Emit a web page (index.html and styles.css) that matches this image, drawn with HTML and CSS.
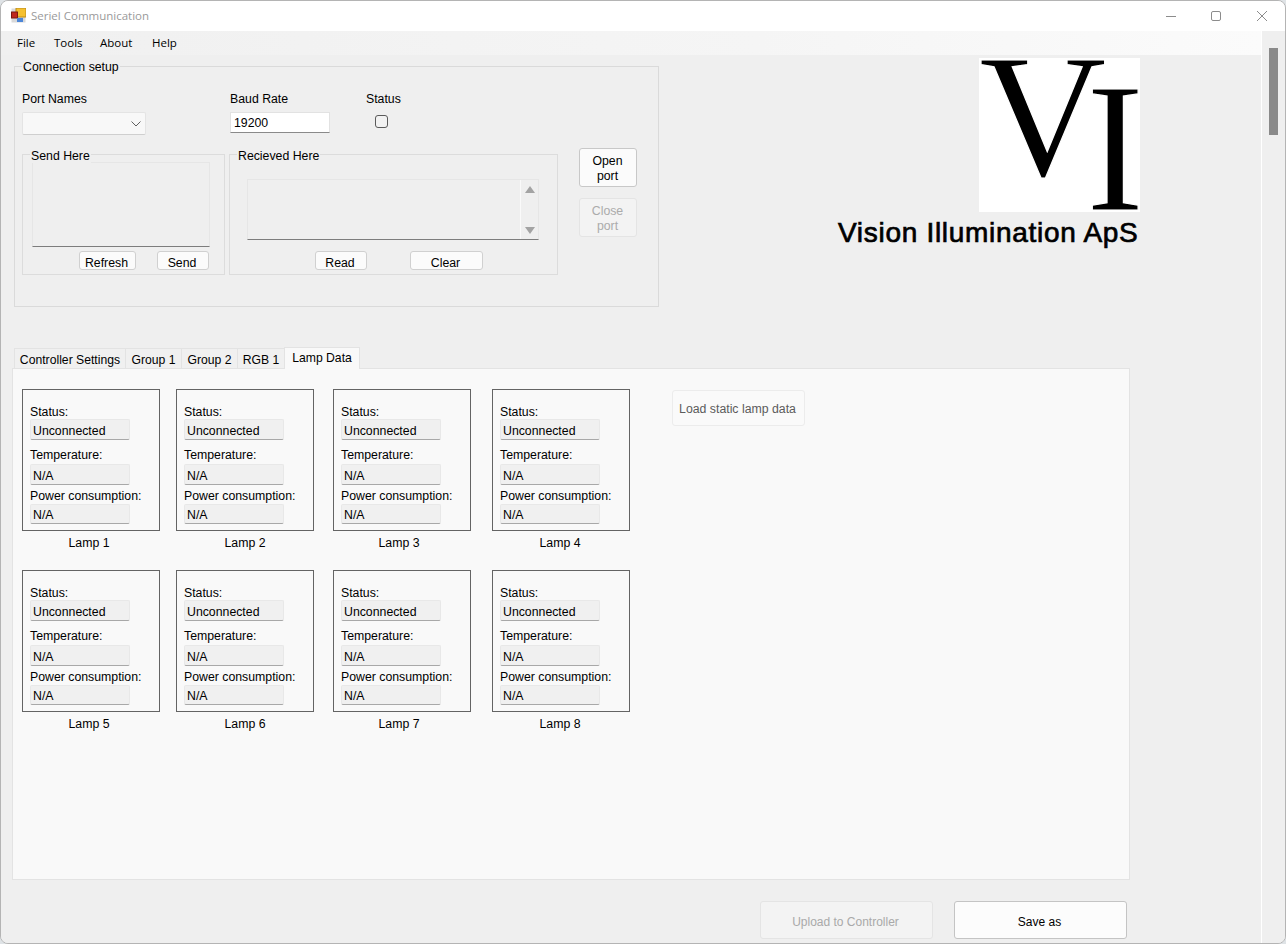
FILE: index.html
```html
<!DOCTYPE html>
<html lang="en">
<head>
<meta charset="utf-8">
<title>Seriel Communication</title>
<link rel="stylesheet" href="styles.css">
</head>
<body>
<div class="window">
  <header class="titlebar">
    <svg class="app-icon" width="15" height="15" viewBox="0 0 15 15">
      <rect x="0.5" y="0.5" width="14" height="14" fill="#d9d9d9"/>
      <rect x="5" y="0" width="10" height="9" fill="#f5c030" stroke="#b98a1a"/>
      <rect x="0.5" y="4" width="6" height="6" fill="#c0281e" stroke="#7a1a12"/>
      <rect x="6" y="10" width="6" height="4" fill="#4c86d8"/>
    </svg>
    <span class="title-text">Seriel Communication</span>
    <div class="win-controls">
      <svg class="win-min" width="10" height="10" viewBox="0 0 10 10"><path d="M0 5.5H10" stroke="#8c8c8c" fill="none"/></svg>
      <svg class="win-max" width="10" height="10" viewBox="0 0 10 10"><rect x="0.5" y="0.5" width="9" height="9" rx="1.5" stroke="#8c8c8c" fill="none"/></svg>
      <svg class="win-close" width="10" height="10" viewBox="0 0 10 10"><path d="M0 0L10 10M10 0L0 10" stroke="#8c8c8c" fill="none"/></svg>
    </div>
  </header>
  <div class="client">
    <main class="main">
      <nav class="menubar">
        <span class="menu-item">File</span>
        <span class="menu-item">Tools</span>
        <span class="menu-item">About</span>
        <span class="menu-item">Help</span>
      </nav>
      <section class="top-row">
        <div class="conn-panel">
          <span class="legend legend-conn">Connection setup</span>
          <div class="conn-fields">
            <div class="col-port">
              <label class="field-label">Port Names</label>
              <div class="combo">
                <svg width="10" height="6" viewBox="0 0 10 6"><path d="M0.5 0.5L5 5L9.5 0.5" stroke="#606060" fill="none"/></svg>
              </div>
            </div>
            <div class="col-baud">
              <label class="field-label">Baud Rate</label>
              <div class="input">19200</div>
            </div>
            <div class="col-status">
              <label class="field-label">Status</label>
              <span class="checkbox"></span>
            </div>
          </div>
          <div class="groups-row">
            <div class="group group-send">
              <span class="legend legend-group">Send Here</span>
              <div class="textbox textbox-send"></div>
              <div class="group-buttons">
                <span class="btn-small btn-refresh">Refresh</span>
                <span class="btn-small btn-send">Send</span>
              </div>
            </div>
            <div class="group group-recv">
              <span class="legend legend-group">Recieved Here</span>
              <div class="textbox textbox-recv">
                <div class="tb-scroll">
                  <span class="arrow-up"></span>
                  <span class="arrow-down"></span>
                </div>
              </div>
              <div class="group-buttons">
                <span class="btn-small btn-read">Read</span>
                <span class="btn-small btn-clear">Clear</span>
              </div>
            </div>
            <div class="port-buttons">
              <span class="btn-port">Open<br>port</span>
              <span class="btn-port btn-disabled">Close<br>port</span>
            </div>
          </div>
        </div>
        <div class="brand">
          <div class="logo"><span class="logo-v">V</span><span class="logo-i">I</span></div>
          <div class="company">Vision Illumination ApS</div>
        </div>
      </section>

      <div class="tabs">
        <span class="tab tab-controller">Controller Settings</span>
        <span class="tab tab-group">Group 1</span>
        <span class="tab tab-group">Group 2</span>
        <span class="tab tab-rgb">RGB 1</span>
        <span class="tab tab-active">Lamp Data</span>
      </div>
      <section class="tab-panel">
        <div class="lamp-grid">
          <div class="lamp lamp-a"><div class="lamp-box"><div class="l-status">Status:</div><div class="l-field">Unconnected</div><div class="l-temp">Temperature:</div><div class="l-field">N/A</div><div class="l-power">Power consumption:</div><div class="l-field">N/A</div></div><div class="lamp-name">Lamp 1</div></div>
          <div class="lamp lamp-b"><div class="lamp-box"><div class="l-status">Status:</div><div class="l-field">Unconnected</div><div class="l-temp">Temperature:</div><div class="l-field">N/A</div><div class="l-power">Power consumption:</div><div class="l-field">N/A</div></div><div class="lamp-name">Lamp 2</div></div>
          <div class="lamp lamp-c"><div class="lamp-box"><div class="l-status">Status:</div><div class="l-field">Unconnected</div><div class="l-temp">Temperature:</div><div class="l-field">N/A</div><div class="l-power">Power consumption:</div><div class="l-field">N/A</div></div><div class="lamp-name">Lamp 3</div></div>
          <div class="lamp lamp-d"><div class="lamp-box"><div class="l-status">Status:</div><div class="l-field">Unconnected</div><div class="l-temp">Temperature:</div><div class="l-field">N/A</div><div class="l-power">Power consumption:</div><div class="l-field">N/A</div></div><div class="lamp-name">Lamp 4</div></div>
          <div class="lamp lamp-a"><div class="lamp-box"><div class="l-status">Status:</div><div class="l-field">Unconnected</div><div class="l-temp">Temperature:</div><div class="l-field">N/A</div><div class="l-power">Power consumption:</div><div class="l-field">N/A</div></div><div class="lamp-name">Lamp 5</div></div>
          <div class="lamp lamp-b"><div class="lamp-box"><div class="l-status">Status:</div><div class="l-field">Unconnected</div><div class="l-temp">Temperature:</div><div class="l-field">N/A</div><div class="l-power">Power consumption:</div><div class="l-field">N/A</div></div><div class="lamp-name">Lamp 6</div></div>
          <div class="lamp lamp-c"><div class="lamp-box"><div class="l-status">Status:</div><div class="l-field">Unconnected</div><div class="l-temp">Temperature:</div><div class="l-field">N/A</div><div class="l-power">Power consumption:</div><div class="l-field">N/A</div></div><div class="lamp-name">Lamp 7</div></div>
          <div class="lamp lamp-d"><div class="lamp-box"><div class="l-status">Status:</div><div class="l-field">Unconnected</div><div class="l-temp">Temperature:</div><div class="l-field">N/A</div><div class="l-power">Power consumption:</div><div class="l-field">N/A</div></div><div class="lamp-name">Lamp 8</div></div>
        </div>
        <span class="btn-load">Load static lamp data</span>
      </section>
      <div class="footer-buttons">
        <span class="btn-footer btn-footer-disabled">Upload to Controller</span>
        <span class="btn-footer">Save as</span>
      </div>
    </main>
    <aside class="scrollbar"><div class="thumb"></div></aside>
  </div>
</div>
</body>
</html>
```
FILE: styles.css
```css
* { box-sizing: border-box; }
html, body { margin: 0; padding: 0; background: #dfe3e6; }
body { font-family: "Liberation Sans", Arial, sans-serif; font-size: 12.3px; color: #000; }

.window {
  width: 1286px; height: 944px;
  border: 1px solid #b4b4b4; border-radius: 8px;
  overflow: hidden;
  display: flex; flex-direction: column;
  background: #efefef;
}

.titlebar {
  height: 30px; flex: none;
  background: #fff;
  display: flex; align-items: center;
  padding-left: 10px;
}
.app-icon { flex: none; margin-top: -1px; }
.title-text {
  font-family: "Open Sans", sans-serif; font-size: 11.5px; color: #9a9a9a;
  margin-left: 5px; margin-top: -1px;
}
.win-controls { margin-left: auto; display: flex; align-items: center; margin-top: -1px; }
.win-min { margin-right: 35px; }
.win-max { margin-right: 36px; }
.win-close { margin-right: 18px; }

.client { flex: 1; display: flex; min-height: 0; }
.main { width: 1260px; flex: none; display: flex; flex-direction: column; background: #efefef; }

.menubar {
  height: 24px; flex: none;
  display: grid; grid-template-columns: 37px 46px 52px auto; align-items: center;
  padding: 0 0 2px 16px;
  font-family: "Open Sans", sans-serif; font-size: 11.5px;
  background: linear-gradient(90deg, #f0f0f0 0%, #f5f5f5 60%, #fbfbfb 100%);
}

.top-row { display: flex; align-items: flex-start; height: 291px; flex: none; }

.conn-panel {
  position: relative;
  width: 645px; height: 241px;
  margin: 11px 0 0 13px;
  border: 1px solid #dadada;
  padding: 24px 0 0 7px;
}
.legend { position: absolute; background: #efefef; padding: 0 1px; line-height: 14px; }
.legend-conn { top: -7px; left: 7px; }
.legend-group { top: -6px; left: 7px; }

.conn-fields { display: flex; }
.col-port { width: 208px; }
.col-baud { width: 136px; }
.field-label { display: block; height: 16px; line-height: 16px; margin-bottom: 5px; }

.combo {
  width: 124px; height: 23px;
  background: #f8f8f8; border: 1px solid #e4e4e4; border-bottom-color: #cfcfcf;
  border-radius: 2px;
  display: flex; align-items: center; justify-content: flex-end; padding-right: 4px;
}
.input {
  width: 100px; height: 21px;
  background: #fff; border: 1px solid #e2e2e2; border-bottom-color: #8a8a8a;
  padding-left: 3px; line-height: 21px;
}
.checkbox {
  display: block; width: 13px; height: 13px;
  margin: 8px 0 0 9px;
  border: 1px solid #5a5a5a; border-radius: 3px; background: #f2f2f2;
}

.groups-row { display: flex; align-items: flex-start; margin-top: 13px; }
.group {
  position: relative;
  height: 121px; margin-top: 6px;
  border: 1px solid #dcdcdc;
}
.group-send { width: 203px; }
.group-recv { width: 329px; margin-left: 4px; }
.textbox {
  background: #efefef;
  border: 1px solid #e6e6e6; border-bottom-color: #7d7d7d;
}
.textbox-send { width: 178px; height: 85px; margin: 7px 0 0 9px; }
.textbox-recv { width: 292px; height: 61px; margin: 24px 0 0 17px; display: flex; justify-content: flex-end; }
.tb-scroll {
  width: 18px; height: 100%;
  border-left: 1px solid #fafafa;
  display: flex; flex-direction: column; justify-content: space-between; align-items: center;
  padding: 6px 0 5px;
}
.arrow-up { width: 0; height: 0; border: 5px solid transparent; border-top: 0; border-bottom: 7px solid #a3a3a3; }
.arrow-down { width: 0; height: 0; border: 5px solid transparent; border-bottom: 0; border-top: 7px solid #a3a3a3; }

.group-buttons { display: flex; }
.group-send .group-buttons { margin: 4px 0 0 56px; }
.group-recv .group-buttons { margin: 11px 0 0 85px; }
.btn-small {
  height: 19px; padding-right: 2px;
  background: #fbfbfb; border: 1px solid #d0d0d0; border-radius: 3px;
  text-align: center; line-height: 23px;
}
.btn-refresh { width: 57px; margin-right: 21px; }
.btn-send { width: 52px; }
.btn-read { width: 52px; margin-right: 43px; }
.btn-clear { width: 73px; }

.port-buttons { margin-left: 21px; display: flex; flex-direction: column; gap: 11px; width: 58px; }
.btn-port {
  height: 39px; padding: 5px 1px 0 0;
  background: #fbfbfb; border: 1px solid #c8c8c8; border-radius: 3px;
  text-align: center; line-height: 15px;
}
.btn-disabled { background: #f3f3f3; border-color: #e4e4e4; color: #ababab; }

.brand { margin: 3px 0 0 179px; width: 302px; }
.logo {
  position: relative;
  width: 161px; height: 154px; margin-left: 141px;
  background: #fff;
  font-family: "Liberation Serif", serif; line-height: 1;
  -webkit-text-stroke: 1.2px #fff;
}
.logo-v {
  position: absolute; left: 0; top: -29px;
  font-size: 175px;
  transform: scaleX(1.01); transform-origin: left top;
}
.logo-i {
  position: absolute; left: 107px; top: -2px;
  font-size: 184px;
  transform: scaleX(0.95); transform-origin: left top;
}
.company {
  font-size: 28px; line-height: 30px; margin-top: 6px; white-space: nowrap;
  letter-spacing: 0.7px;
  -webkit-text-stroke: 0.7px #000;
}

.tabs { display: flex; align-items: flex-end; height: 22px; margin-left: 13px; flex: none; position: relative; z-index: 1; }
.tab {
  height: 20px; line-height: 22px; padding: 0;
  background: #f0f0f0; border: 1px solid #e3e3e3; border-bottom: 0; margin-right: -1px;
  text-align: center; white-space: nowrap; font-size: 12.2px;
}
.tab-controller { width: 112px; }
.tab-group { width: 57px; }
.tab-rgb { width: 48px; }
.tab-active { width: 76px; height: 22px; line-height: 20px; background: #f9f9f9; margin-bottom: -1px; }

.tab-panel {
  width: 1118px; height: 512px; margin-left: 11px; flex: none;
  background: #f9f9f9; border: 1px solid #e3e3e3;
  padding: 20px 0 0 9px;
  display: flex; align-items: flex-start;
}
.lamp-grid {
  display: grid;
  grid-template-columns: 154px 157px 159px 138px;
  grid-auto-rows: 181px;
  width: 608px;
}
.lamp-box {
  width: 138px; height: 142px;
  border: 1px solid #646464;
  padding: 14px 0 0 7px;
}
.l-status, .l-temp, .l-power { height: 16px; line-height: 16px; white-space: nowrap; }
.l-temp { margin-top: 7px; margin-bottom: 2px; }
.l-power { margin-top: 3px; }
.l-field {
  width: 100px; height: 21px; margin-top: -1px;
  background: #f0f0f0;
  border: 1px solid #e8e8e8; border-bottom-color: #a8a8a8; border-radius: 2px;
  padding-left: 2px; line-height: 23px;
}
.l-power + .l-field { margin-top: 0; height: 20px; line-height: 20px; }
.lamp-name { height: 16px; line-height: 16px; margin-top: 4px; text-align: center; width: 138px; }
.lamp-a .lamp-name { padding-right: 4px; }
.lamp-c .lamp-name { padding-right: 6px; }
.lamp-d .lamp-name { padding-right: 2px; }

.btn-load {
  margin: 1px 0 0 42px; padding-right: 2px;
  width: 133px; height: 36px;
  background: #fafafa; border: 1px solid #ececec; border-radius: 3px;
  text-align: center; line-height: 36px; color: #5c5c5c;
  white-space: nowrap;
}

.footer-buttons { display: flex; gap: 21px; margin: 21px 0 0 759px; }
.btn-footer {
  width: 173px; height: 38px; padding-right: 2px;
  background: #fcfcfc; border: 1px solid #c4c4c4; border-radius: 3px;
  text-align: center; line-height: 40px; font-size: 12px;
}
.btn-footer-disabled { background: #f3f3f3; border-color: #e4e4e4; color: #a9a9a9; }

.scrollbar {
  flex: 1; border-left: 1px solid #fff; background: #efefef;
  padding: 17px 0 0 7px;
}
.thumb { width: 9px; height: 87px; background: #8a8a8a; }
```
